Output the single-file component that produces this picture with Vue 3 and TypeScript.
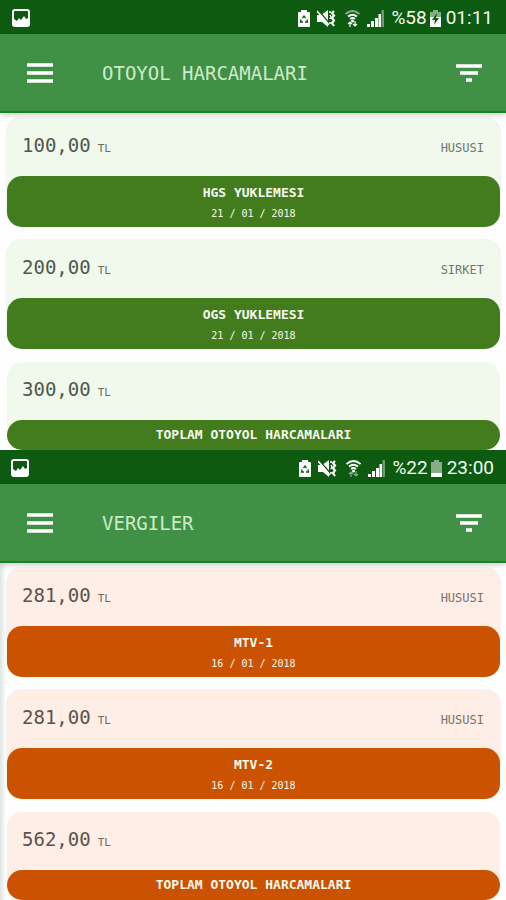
<script setup lang="ts">
interface Entry {
  amount: string
  owner?: string
  label: string
  date?: string
}

interface Screen {
  id: string
  title: string
  battery: string
  charging: boolean
  time: string
  entries: Entry[]
}

const screens: Screen[] = [
  {
    id: 'motorway',
    title: 'OTOYOL HARCAMALARI',
    battery: '%58',
    charging: true,
    time: '01:11',
    entries: [
      { amount: '100,00', owner: 'HUSUSI', label: 'HGS YUKLEMESI', date: '21 / 01 / 2018' },
      { amount: '200,00', owner: 'SIRKET', label: 'OGS YUKLEMESI', date: '21 / 01 / 2018' },
      { amount: '300,00', label: 'TOPLAM OTOYOL HARCAMALARI' },
    ],
  },
  {
    id: 'taxes',
    title: 'VERGILER',
    battery: '%22',
    charging: false,
    time: '23:00',
    entries: [
      { amount: '281,00', owner: 'HUSUSI', label: 'MTV-1', date: '16 / 01 / 2018' },
      { amount: '281,00', owner: 'HUSUSI', label: 'MTV-2', date: '16 / 01 / 2018' },
      { amount: '562,00', label: 'TOPLAM OTOYOL HARCAMALARI' },
    ],
  },
]
</script>

<template>
  <main>
    <section v-for="s in screens" :key="s.id" class="screen" :class="s.id">
      <div class="status">
        <svg class="picture" width="18" height="18" viewBox="0 0 18 18" aria-hidden="true">
          <rect x="1" y="1" width="16" height="16" rx="2" fill="none" stroke="#fff" stroke-width="2" />
          <path d="M2 16V10L5 12L7 9L9 11L12 7L14 10L16 9V16Z" fill="#fff" />
        </svg>
        <div class="indicators">
          <svg width="12" height="17" viewBox="0 0 12 17" aria-hidden="true">
            <path d="M1 2H3V0H9V2H11Q12 2 12 3V16Q12 17 11 17H1Q0 17 0 16V3Q0 2 1 2Z" fill="#fff" />
            <path d="M4.500 8L6 6L7.500 8M9 9.500L9.500 12H7M5 12H2.500L3 9.500" fill="none" stroke="#0d5b10" stroke-width="1.300" />
          </svg>
          <svg width="19" height="17" viewBox="0 0 19 17" aria-hidden="true">
            <path d="M0 5H4L11 0V17L5 12H0Z" fill="#fff" />
            <path d="M1 0L13 14" stroke="#0d5b10" stroke-width="1.500" />
            <path d="M0 1L12 15" stroke="#fff" stroke-width="1.600" />
            <path d="M13 5L14 7L13 9" fill="none" stroke="#fff" stroke-width="1.500" />
            <path d="M17 1L15 3L17 5.500L15 8L17 10.500L15 13L17 16" fill="none" stroke="#fff" stroke-width="2.200" />
            <path d="M13 1V3M13 12V14" fill="none" stroke="#fff" stroke-width="1.500" />
          </svg>
          <svg class="wifi" width="15" height="17" viewBox="0 0 15 17" aria-hidden="true">
            <path d="M0.500 4Q7.500 -2 14.500 4" fill="none" stroke="#fff" stroke-width="1.700" :opacity="s.charging ? 0.5 : 1" />
            <path d="M3 6.500Q7.500 3 12 6.500M5 9Q7.500 7 10 9" fill="none" stroke="#fff" stroke-width="1.900" />
            <circle cx="7.500" cy="11" r="1.500" fill="#fff" />
            <path d="M5 12V17M3 14L5 12L7 14M10 11V16M8 14L10 16L12 14" fill="none" stroke="#fff" stroke-width="1.200" :opacity="s.charging ? 1 : 0.5" />
          </svg>
          <svg width="17" height="17" viewBox="0 0 17 17" aria-hidden="true">
            <path d="M0 14H3V17H0ZM4 11H7V17H4ZM8 8H11V17H8ZM11.500 4H14V17H11.500Z" fill="#fff" />
            <path d="M14.500 0H17V17H14.500Z" fill="#fff" opacity="0.4" />
          </svg>
          <span>{{ s.battery }}</span>
          <svg class="battery" width="11" height="17" viewBox="0 0 11 17" aria-hidden="true">
            <path d="M0 2H3V0H8V2H11V17H0V2Z" fill="#fff" opacity="0.5" />
            <path v-if="s.charging" d="M0 7H11V17H0Z" fill="#fff" />
            <path v-else d="M0 13H11V17H0Z" fill="#fff" />
            <path v-if="s.charging" d="M7 3L2 10H5L4 15L9 8H6Z" fill="#0d5b10" />
          </svg>
          <span>{{ s.time }}</span>
        </div>
      </div>
      <header class="bar">
        <button type="button" aria-label="Menu">
          <svg width="26" height="20" viewBox="0 0 26 20" aria-hidden="true">
            <path d="M0 2H26M0 10H26M0 18H26" stroke="#fff" stroke-width="3.500" />
          </svg>
        </button>
        <h1>{{ s.title }}</h1>
        <button type="button" aria-label="Filter">
          <svg width="26" height="20" viewBox="0 0 26 20" aria-hidden="true">
            <path d="M0 3H26M4 10H22M10 17H16" stroke="#fff" stroke-width="3.500" />
          </svg>
        </button>
      </header>
      <div class="list">
        <article v-for="(e, i) in s.entries" :key="i" class="card">
          <div class="head">
            <span class="amount">{{ e.amount }}</span>
            <span class="unit">TL</span>
            <span v-if="e.owner" class="owner">{{ e.owner }}</span>
          </div>
          <div class="band" :class="{ total: !e.date }">
            <div class="label">{{ e.label }}</div>
            <div v-if="e.date" class="date">{{ e.date }}</div>
          </div>
        </article>
      </div>
    </section>
  </main>
</template>

<style>
body {
  background: #fdfdfd;
}
</style>

<style scoped>
.screen {
  --tint: #f0f9ec;
  --band: #437c1d;
  --ink: #51574e;
  font-family: "DejaVu Sans Mono", "Liberation Mono", monospace;
  background: #fefefe;
}
.taxes {
  --tint: #feeee5;
  --band: #ca5200;
  --ink: #5c534d;
  background: linear-gradient(to right, #dfe5e2, #fefefe 6px);
}
.status {
  display: flex;
  align-items: center;
  justify-content: space-between;
  height: 34px;
  padding: 2px 13px 0 12px;
  box-sizing: border-box;
  background: #0d5b10;
}
.taxes .status {
  padding-left: 11px;
  padding-right: 12px;
}
.indicators {
  display: flex;
  align-items: center;
  gap: 7px;
  color: #f4fbf4;
  font: 19px/20px Roboto, "Liberation Sans", sans-serif;
}
.wifi {
  margin-left: 2px;
}
.battery {
  margin: 0 -2px 0 -4px;
}
.bar {
  display: flex;
  align-items: center;
  height: 79px;
  padding: 0 24px 0 27px;
  box-sizing: border-box;
  background: #409045;
  border-bottom: 2px solid #168222;
  box-shadow: 0 2px 5px rgba(0, 0, 0, 0.2);
}
.bar button {
  display: block;
  padding: 0;
  border: 0;
  background: none;
}
.bar svg {
  display: block;
}
h1 {
  flex: 1;
  margin: 0 0 0 49px;
  color: #cdebc9;
  font-size: 19px;
  font-weight: 400;
  line-height: 24px;
}
.list {
  display: flex;
  flex-direction: column;
  gap: 13px;
  padding: 5px 6px 0 7px;
}
.card {
  border-radius: 15px;
  background: var(--tint);
  box-shadow: 0 0 2px rgba(0, 0, 0, 0.16);
}
.card:last-child {
  box-shadow: none;
}
.head {
  display: flex;
  align-items: baseline;
  gap: 7px;
  height: 58px;
  padding: 15px 16px 0 15px;
  box-sizing: border-box;
  color: var(--ink);
  line-height: 24px;
}
.amount {
  font-size: 19px;
}
.unit {
  font-size: 11px;
  opacity: 0.85;
}
.owner {
  margin-left: auto;
  font-size: 12px;
  opacity: 0.8;
}
.band {
  padding: 7px 0 2px;
  border-radius: 15px;
  background: var(--band);
  color: #f6faef;
  text-align: center;
  line-height: 20px;
}
.total {
  padding: 5px 0;
}
.label {
  font-size: 13px;
  font-weight: 700;
}
.date {
  font-size: 10px;
  line-height: 22px;
}
</style>
